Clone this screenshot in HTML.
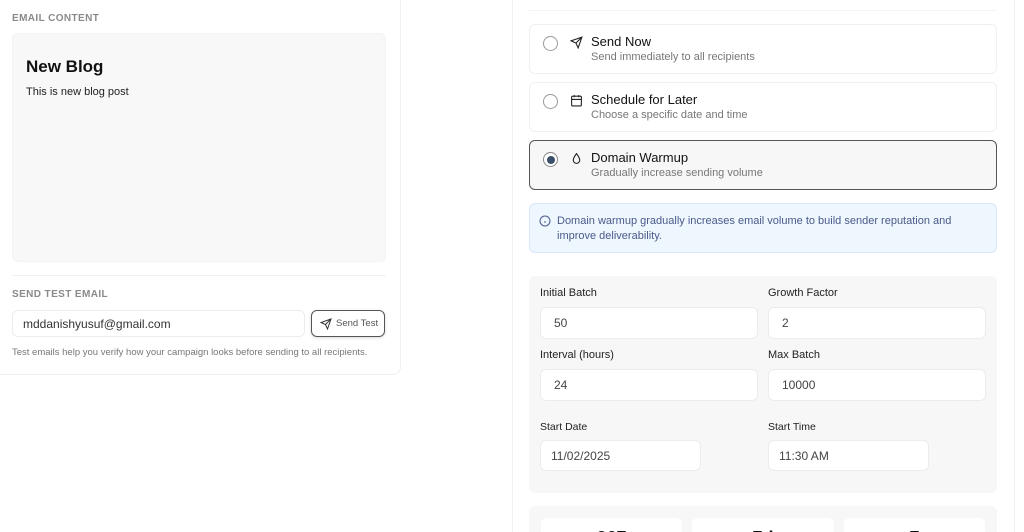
<!DOCTYPE html>
<html style="width:1024px;height:532px;overflow:hidden"><head><meta charset="utf-8"><style>
*{box-sizing:border-box;margin:0;padding:0}
body{width:1024px;height:532px;overflow:hidden;background:#fff;font-family:"Liberation Sans",sans-serif;position:relative;color:#111}
.a{position:absolute}
.lbl{font-size:10px;letter-spacing:.4px;color:#8a8a8a;font-weight:bold}
.opt{position:absolute;left:529px;width:468px;height:50px;border:1px solid #f0f0f0;border-radius:6px;background:#fff}
.opt .r{position:absolute;left:13px;top:11px;width:15px;height:15px;border:1px solid #999;border-radius:50%}
.opt .t{position:absolute;left:61px;top:9px;font-size:13px;color:#111}
.opt .s{position:absolute;left:61px;top:26px;font-size:11px;color:#777}
.opt svg{position:absolute;left:40px;top:11px}
.fl{position:absolute;font-size:11px;color:#222}
.in{position:absolute;background:#fff;border:1px solid #ececec;border-radius:6px;font-size:12px;color:#444;padding-left:13px;display:flex;align-items:center}
</style></head><body>
<div class="a" style="left:-10px;top:-10px;width:411px;height:385px;border:1px solid #f0f0f0;border-radius:8px"></div>
<div class="a lbl" style="left:12px;top:13px">EMAIL CONTENT</div>
<div class="a" style="left:12px;top:33px;width:374px;height:229px;background:#f8f8f8;border:1px solid #f3f3f3;border-radius:6px"></div>
<div class="a" style="left:26px;top:57px;font-size:17px;font-weight:bold">New Blog</div>
<div class="a" style="left:26px;top:86px;font-size:11px;color:#222">This is new blog post</div>
<div class="a" style="left:12px;top:275px;width:374px;height:1px;background:#f0f0f0"></div>
<div class="a lbl" style="left:12px;top:289px">SEND TEST EMAIL</div>
<div class="in" style="left:12px;top:310px;width:293px;height:27px;font-size:12px;color:#333;padding-left:10px">mddanishyusuf@gmail.com</div>
<div class="a" style="left:311px;top:310px;width:74px;height:27px;border:1px solid #555;border-radius:6px;box-shadow:0 1px 3px rgba(0,0,0,.15);font-size:9.5px;color:#555;display:flex;align-items:center;padding-left:8px;white-space:nowrap">
<svg width="12" height="12" viewBox="0 0 24 24" fill="none" stroke="#333" stroke-width="2"><path d="M22 2 11 13M22 2l-7 20-4-9-9-4z"/></svg><span style="margin-left:4px">Send Test</span></div>
<div class="a" style="left:12px;top:347px;font-size:9.5px;color:#777;white-space:nowrap">Test emails help you verify how your campaign looks before sending to all recipients.</div>

<div class="a" style="left:512px;top:-10px;width:503px;height:560px;border:1px solid #f0f0f0;border-radius:8px"></div>
<div class="a" style="left:529px;top:10px;width:468px;height:1px;background:#f3f3f3"></div>
<div class="opt" style="top:24px"><div class="r"></div><svg width="13" height="13" viewBox="0 0 24 24" fill="none" stroke="#222" stroke-width="2"><path d="M22 2 11 13M22 2l-7 20-4-9-9-4z"/></svg><div class="t">Send Now</div><div class="s">Send immediately to all recipients</div></div>
<div class="opt" style="top:82px"><div class="r"></div><svg width="13" height="13" viewBox="0 0 24 24" fill="none" stroke="#222" stroke-width="2"><rect x="3" y="4" width="18" height="18" rx="2"/><path d="M16 2v4M8 2v4M3 10h18"/></svg><div class="t">Schedule for Later</div><div class="s">Choose a specific date and time</div></div>
<div class="opt" style="top:140px;border-color:#555;background:#f7f7f7"><div class="r" style="border-color:#888;background:#fff"><div style="position:absolute;left:2.5px;top:2.5px;width:8px;height:8px;border-radius:50%;background:#3b4f6b"></div></div><svg width="13" height="13" viewBox="0 0 24 24" fill="none" stroke="#222" stroke-width="2"><path d="M12 3c3 4 6 8 6 12a6 6 0 0 1-12 0c0-4 3-8 6-12z"/></svg><div class="t">Domain Warmup</div><div class="s">Gradually increase sending volume</div></div>
<div class="a" style="left:529px;top:203px;width:468px;height:50px;background:#eef6fe;border:1px solid #d7e8fa;border-radius:6px"></div>
<svg class="a" style="left:539px;top:215px" width="12" height="12" viewBox="0 0 24 24" fill="none" stroke="#4a5a8a" stroke-width="2"><circle cx="12" cy="12" r="10"/><path d="M12 16v-4M12 8h.01"/></svg>
<div class="a" style="left:557px;top:214px;width:420px;font-size:11px;line-height:15px;color:#4a5a8a">Domain warmup gradually increases email volume to build sender reputation and improve deliverability.</div>

<div class="a" style="left:529px;top:276px;width:468px;height:217px;background:#f7f7f7;border-radius:6px"></div>
<div class="fl" style="left:540px;top:287px">Initial Batch</div>
<div class="fl" style="left:768px;top:287px">Growth Factor</div>
<div class="in" style="left:540px;top:307px;width:218px;height:32px">50</div>
<div class="in" style="left:768px;top:307px;width:218px;height:32px">2</div>
<div class="fl" style="left:540px;top:349px">Interval (hours)</div>
<div class="fl" style="left:768px;top:349px">Max Batch</div>
<div class="in" style="left:540px;top:369px;width:218px;height:32px">24</div>
<div class="in" style="left:768px;top:369px;width:218px;height:32px">10000</div>
<div class="fl" style="left:540px;top:421px;font-size:10.5px">Start Date</div>
<div class="fl" style="left:768px;top:421px;font-size:10.5px">Start Time</div>
<div class="in" style="left:540px;top:440px;width:161px;height:31px;padding-left:10px">11/02/2025</div>
<div class="in" style="left:768px;top:440px;width:161px;height:31px;padding-left:10px">11:30 AM</div>

<div class="a" style="left:529px;top:506px;width:468px;height:40px;background:#f7f7f7;border-radius:6px"></div>
<div class="a" style="left:541px;top:518px;width:141px;height:30px;background:#fff;border-radius:6px;text-align:center;font-weight:bold;font-size:18px;padding-top:10px;overflow:hidden">367</div>
<div class="a" style="left:692px;top:518px;width:142px;height:30px;background:#fff;border-radius:6px;text-align:center;font-weight:bold;font-size:18px;padding-top:10px">7d</div>
<div class="a" style="left:844px;top:518px;width:141px;height:30px;background:#fff;border-radius:6px;text-align:center;font-weight:bold;font-size:18px;padding-top:10px">7</div>
</body></html>
